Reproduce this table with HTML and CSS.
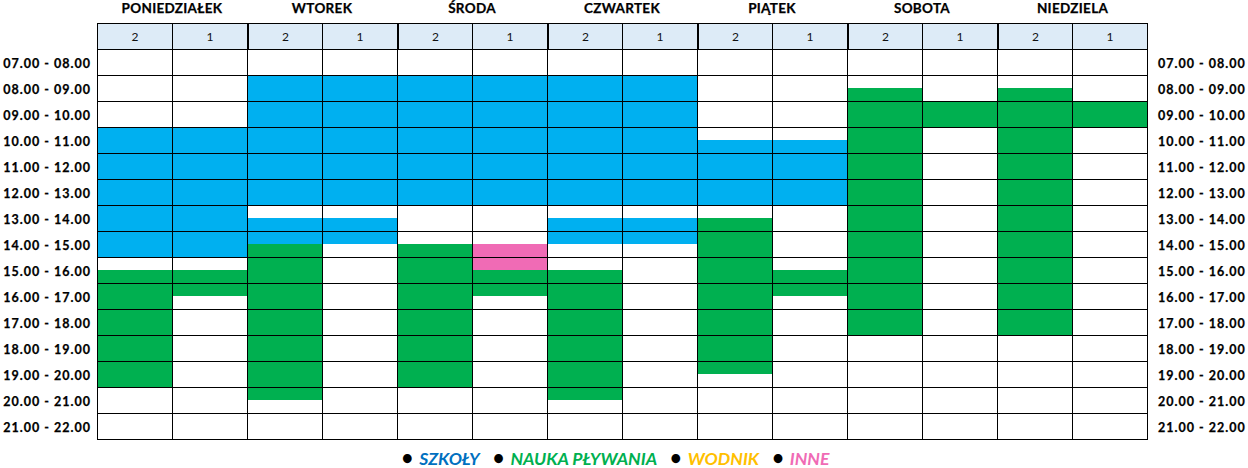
FILE: index.html
```html
<!DOCTYPE html>
<html lang="pl">
<head>
<meta charset="utf-8">
<title>Grafik basenu</title>
<link rel="stylesheet" href="styles.css">
</head>
<body>
<main class="sheet" id="sheet">
  <div class="blank"></div>
  <div class="day">PONIEDZIAŁEK</div>
  <div class="day">WTOREK</div>
  <div class="day">ŚRODA</div>
  <div class="day">CZWARTEK</div>
  <div class="day">PIĄTEK</div>
  <div class="day">SOBOTA</div>
  <div class="day">NIEDZIELA</div>
  <div class="blank"></div>

  <div class="blank"></div>
  <div class="hcell">2</div><div class="hcell">1</div>
  <div class="hcell day-start">2</div><div class="hcell">1</div>
  <div class="hcell day-start">2</div><div class="hcell">1</div>
  <div class="hcell day-start">2</div><div class="hcell">1</div>
  <div class="hcell day-start">2</div><div class="hcell">1</div>
  <div class="hcell day-start">2</div><div class="hcell">1</div>
  <div class="hcell day-start">2</div><div class="hcell last">1</div>
  <div class="blank"></div>
</main>
<footer class="legend">
  <span class="dot">•</span><span class="lg lg-school">SZKOŁY</span>
  <span class="dot">•</span><span class="lg lg-swim">NAUKA PŁYWANIA</span>
  <span class="dot">•</span><span class="lg lg-wodnik">WODNIK</span>
  <span class="dot">•</span><span class="lg lg-other">INNE</span>
</footer>
<script src="script.js"></script>
</body>
</html>
```

FILE: styles.css
```css
* { box-sizing: border-box; }

html, body {
  margin: 0;
  padding: 0;
  background: #fff;
}

body {
  font-family: "Lato", "Noto Sans", sans-serif;
  color: #000;
  width: 1248px;
  height: 468px;
  overflow: hidden;
}

.sheet {
  display: grid;
  grid-template-columns: 97px repeat(13, 75px) 76px 1fr;
}

.blank { height: 23px; }
.sheet > .blank:nth-child(n+10) { height: 26px; }

.day {
  grid-column: span 2;
  height: 23px;
  text-align: center;
  font-weight: 700;
  font-size: 13.5px;
  line-height: 17px;
  letter-spacing: 0.3px;
  -webkit-text-stroke: 0.25px #000;
}

.hcell {
  height: 26px;
  border-top: 1px solid #000;
  border-left: 1px solid #000;
  background: #ddebf7;
  text-align: center;
  font-size: 12px;
  line-height: 25px;
  color: #111;
}

.day-start { border-left-width: 2px; }
.last { border-right: 1px solid #000; }

.time {
  height: 26px;
  font-weight: 700;
  font-size: 12.5px;
  letter-spacing: 1px;
  line-height: 29px;
  white-space: nowrap;
  -webkit-text-stroke: 0.25px #000;
}
.time-left { text-align: right; padding-right: 6px; }
.time-right { text-align: left; padding-left: 10px; }

.cell {
  --t: #fff;
  --b: #fff;
  height: 26px;
  border-top: 1px solid #000;
  border-left: 1px solid #000;
  background: linear-gradient(to bottom, var(--t) 0 12px, var(--b) 12px 100%);
}
.cell.bottom, .time.bottom { height: 27px; }
.cell.bottom { border-bottom: 1px solid #000; }

.t-b { --t: #00b0f0; }
.b-b { --b: #00b0f0; }
.t-g { --t: #00b050; }
.b-g { --b: #00b050; }
.t-p { --t: #f06bb5; }
.b-p { --b: #f06bb5; }

.legend {
  display: flex;
  justify-content: center;
  align-items: baseline;
  margin-top: 7px;
  padding-right: 17px;
  font-weight: 700;
  font-style: italic;
  font-size: 17.6px;
  line-height: 20px;
}
.legend .dot {
  font-style: normal;
  font-size: 20px;
  margin-right: 6px;
}
.legend .lg { margin-right: 13px; }
.lg-school { color: #0070c0; }
.lg-swim { color: #00b050; }
.lg-wodnik { color: #ffc000; }
.lg-other { color: #f06bb5; }
.legend .lg-other { margin-right: 0; }
```

FILE: script.js
```js
(function () {
  // 30 half-hour slots per column (07:00 - 22:00): w = free, b = schools, g = swimming lessons, p = other
  var cols = [
    "wwwwwwbbbbbbbbbbwgggggggggwwww", // Pon 2
    "wwwwwwbbbbbbbbbbwggwwwwwwwwwww", // Pon 1
    "wwbbbbbbbbbbwbbggggggggggggwww", // Wt 2
    "wwbbbbbbbbbbwbbwwwwwwwwwwwwwww", // Wt 1
    "wwbbbbbbbbbbwwwgggggggggggwwww", // Śr 2
    "wwbbbbbbbbbbwwwppggwwwwwwwwwww", // Śr 1
    "wwbbbbbbbbbbwbbwwggggggggggwww", // Czw 2
    "wwbbbbbbbbbbwbbwwwwwwwwwwwwwww", // Czw 1
    "wwwwwwwbbbbbwggggggggggggwwwww", // Pt 2
    "wwwwwwwbbbbbwwwwwggwwwwwwwwwww", // Pt 1
    "wwwgggggggggggggggggggwwwwwwww", // Sob 2
    "wwwwggwwwwwwwwwwwwwwwwwwwwwwww", // Sob 1
    "wwwgggggggggggggggggggwwwwwwww", // Nd 2
    "wwwwggwwwwwwwwwwwwwwwwwwwwwwww"  // Nd 1
  ];
  var sheet = document.getElementById("sheet");
  function pad(n) { return (n < 10 ? "0" : "") + n + ".00"; }
  for (var r = 0; r < 15; r++) {
    var label = pad(7 + r) + " - " + pad(8 + r);
    var isLast = r === 14;
    var left = document.createElement("div");
    left.className = "time time-left" + (isLast ? " bottom" : "");
    left.textContent = label;
    sheet.appendChild(left);
    for (var c = 0; c < 14; c++) {
      var cell = document.createElement("div");
      var cls = "cell";
      if (c % 2 === 0 && c > 0) cls += " day-start";
      if (c === 13) cls += " last";
      if (isLast) cls += " bottom";
      var top = cols[c].charAt(2 * r);
      var bot = cols[c].charAt(2 * r + 1);
      if (top !== "w") cls += " t-" + top;
      if (bot !== "w") cls += " b-" + bot;
      cell.className = cls;
      sheet.appendChild(cell);
    }
    var right = document.createElement("div");
    right.className = "time time-right" + (isLast ? " bottom" : "");
    right.textContent = label;
    sheet.appendChild(right);
  }
})();
```
